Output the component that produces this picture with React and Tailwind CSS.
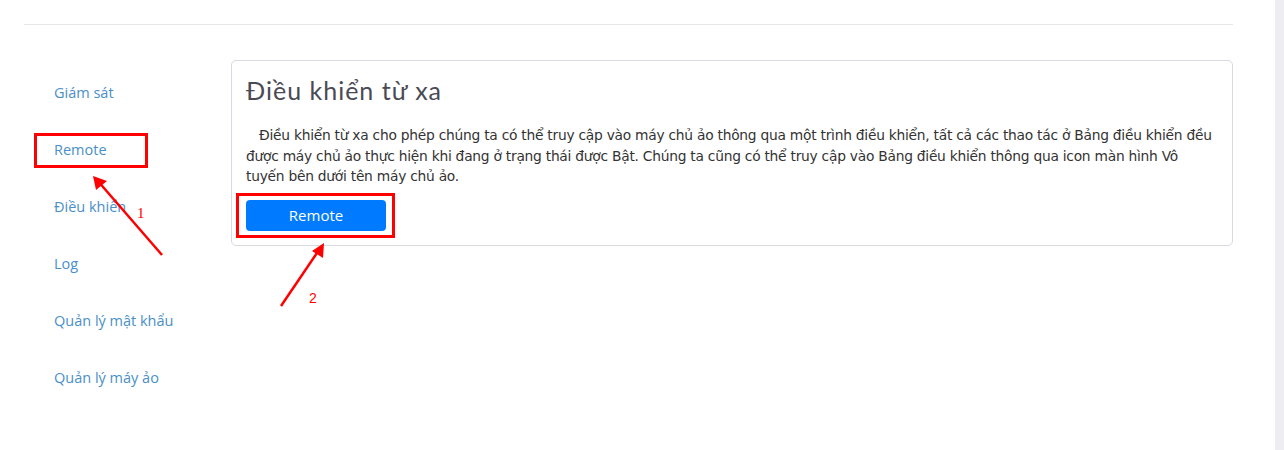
import React from 'react';

const menu = ['Giám sát', 'Remote', 'Điều khiển', 'Log', 'Quản lý mật khẩu', 'Quản lý máy ảo'];

export default function App() {
  return (
    <div className="relative w-[1284px] h-[450px] bg-white overflow-hidden flex">
      <div className="w-[1275px] h-full">
        <div className="ml-6 w-[1209px] h-[25px] border-b border-[#e5e5ea]" />
        <div className="flex pt-[35px] pl-6">
          {/* sidebar */}
          <ul className="w-[207px] pt-[22px] font-['Open_Sans',sans-serif] text-[14.5px] text-[#4a8fc7]">
            {menu.map((m) => (
              <li key={m} className="h-[57px] pl-[30px] leading-[22px]">{m}</li>
            ))}
          </ul>
          {/* card */}
          <div className="w-[1002px] h-[186px] border border-[#d9d9e3] rounded-[5px] px-[14px] pt-[13px]">
            <h2 className="font-['Lato',sans-serif] font-normal text-[25px] leading-[32px] text-[#4a4a55] tracking-[1px]">Điều khiển từ xa</h2>
            <p className="mt-[19px] font-['DejaVu_Sans',sans-serif] text-[13.8px] leading-[20.5px] text-[#333] indent-[13px] tracking-[-0.25px]">
              Điều khiển từ xa cho phép chúng ta có thể truy cập vào máy chủ ảo thông qua một trình điều khiển, tất cả các thao tác ở Bảng điều khiển đều được máy chủ ảo thực hiện khi đang ở trạng thái được Bật. Chúng ta cũng có thể truy cập vào Bảng điều khiển thông qua icon màn hình Vô tuyến bên dưới tên máy chủ ảo.
            </p>
            <button className="mt-[13px] w-[140px] h-[31px] rounded-[4px] bg-[#007bff] text-white font-['Open_Sans',sans-serif] text-[15px]">
              Remote
            </button>
          </div>
        </div>
      </div>
      <div className="w-[9px] h-full bg-[#ededf2]" />

      {/* annotations */}
      <div className="absolute left-[34px] top-[133px] w-[114px] h-[35px] border-[3px] border-[#ff0000]" />
      <div className="absolute left-[236px] top-[193px] w-[159px] h-[45px] border-[3px] border-[#ff0000]" />
      <svg className="absolute left-0 top-0" width="1284" height="450">
        <line x1="162" y1="255" x2="97" y2="180" stroke="#ff0000" strokeWidth="2.5" />
        <path d="M93,176 L96,190 L107,181 z" fill="#ff0000" />
        <line x1="281" y1="306" x2="321" y2="247" stroke="#ff0000" strokeWidth="2.5" />
        <path d="M324,243 L312,251 L323,258 z" fill="#ff0000" />
      </svg>
      <span className="absolute left-[137px] top-[202px] font-['Liberation_Serif',serif] text-[15px] text-[#ff0000]">1</span>
      <span className="absolute left-[309px] top-[288px] font-['Liberation_Sans',sans-serif] text-[14px] text-[#ff0000]">2</span>
    </div>
  );
}
